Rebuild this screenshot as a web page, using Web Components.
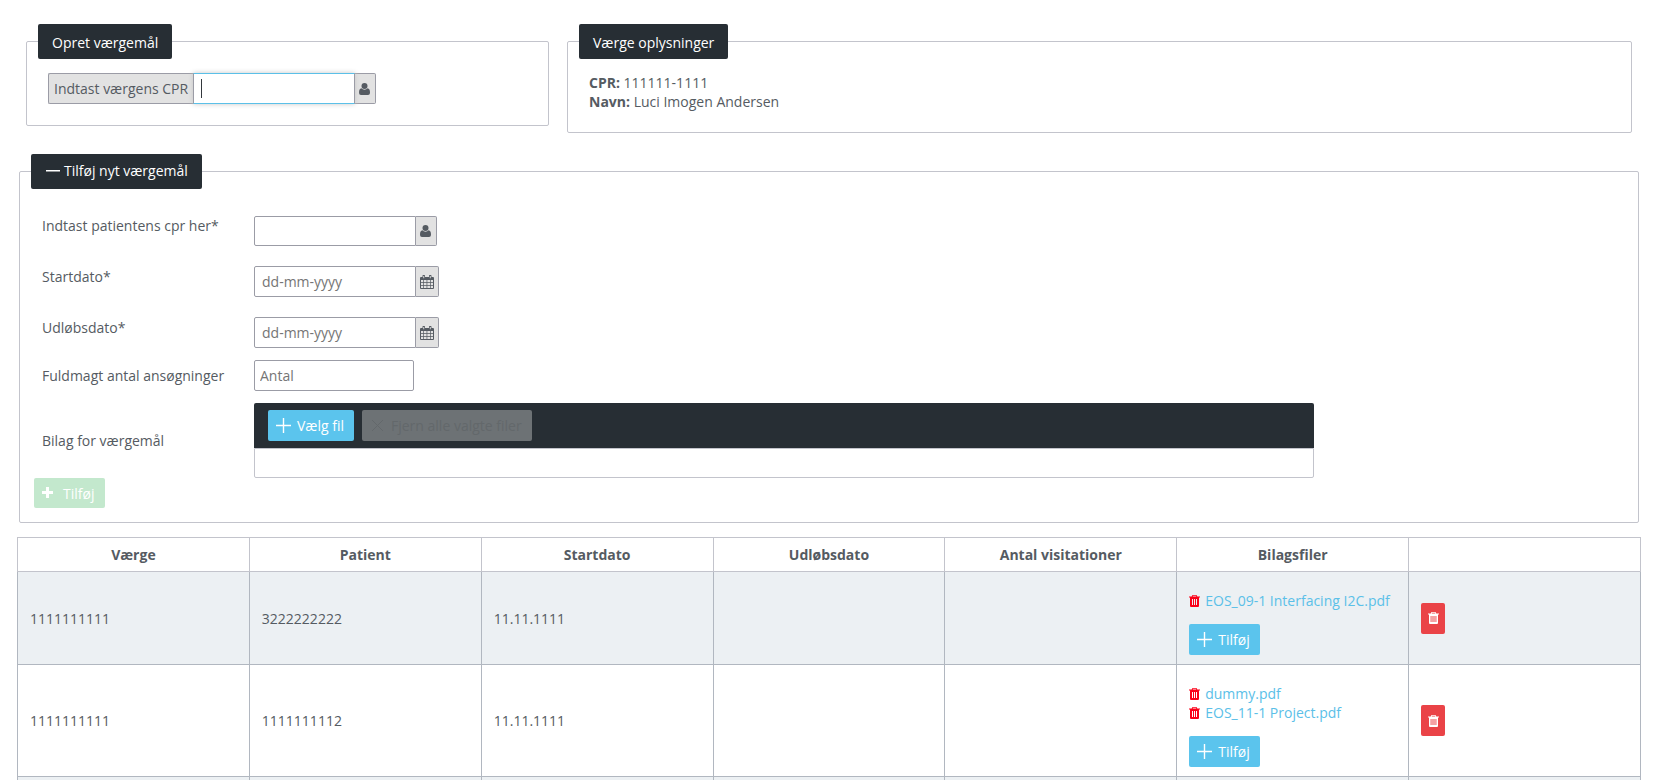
<!DOCTYPE html>
<html lang="da">
<head>
<meta charset="utf-8">
<title>Værgemål</title>
<style>
body{margin:0;background:#fff;font-family:"Open Sans","Noto Sans",sans-serif;font-size:14px;line-height:19px;color:#555b62}
</style>
</head>
<body>
<vm-page></vm-page>

<template id="t-icon">
<style>
:host{display:inline-flex;flex:none}
svg{display:block;fill:currentColor}
</style>
<svg aria-hidden="true"></svg>
</template>

<template id="t-panel">
<style>
:host{display:block}
fieldset{margin:0;min-width:0;border:1px solid #c3c4cc;border-radius:2px;padding:var(--panel-pad,14px 21px 21px)}
legend{margin-left:var(--legend-shift,-10px);padding:var(--legend-pad,2px 14px 0);background:#272e34;color:#fff;border-radius:2px;line-height:33px}
legend span{display:flex;align-items:center;gap:4px}
</style>
<fieldset><legend><span><slot name="icon"></slot><slot name="title"></slot></span></legend><slot></slot></fieldset>
</template>

<template id="t-button">
<style>
:host{display:inline-block;vertical-align:top}
button{display:flex;align-items:center;gap:6px;height:31px;margin:0;padding:0 10px 0 8px;border:0;border-radius:2px;background:#5bc4ed;color:#fff;font:inherit}
:host([kind=danger]) button{background:#ea4347;padding:0 6px 0 7px}
:host([kind=success]) button{background:#c3e8cd;height:30px;gap:10px;padding-right:11px}
:host([kind=muted]) button{background:#6d7275;color:#63686b}
</style>
<button type="button"><slot></slot></button>
</template>

<template id="t-field">
<style>
:host{display:flex;position:relative}
.addon{display:flex;align-items:center;background:#e2e2e2;border:1px solid #9b9ca6;padding:0 5px;color:#555b62}
label.addon{border-right:0;border-radius:2px 0 0 2px;white-space:nowrap}
.box{display:flex;position:relative}
.end{border-left:0;border-radius:0 2px 2px 0}
.end.person{padding:0 5px 0 4px}
.end.calendar{padding:0 4px}
input{box-sizing:border-box;width:162px;height:var(--field-height,31px);margin:0;padding:0 7px;border:1px solid #9b9ca6;border-radius:2px;background:#fff;color:#555b62;font:inherit;outline:0;caret-color:transparent}
input.plain{width:160px;padding:0 5px}
input::placeholder{color:#757575;opacity:1}
input:focus{border-top-color:#5bc0e8;border-bottom-color:#5bc0e8;box-shadow:0 0 5px #c8c8c8}
.caret{display:none;position:absolute;left:8px;top:6px;bottom:6px;width:1px;background:#33383d}
input:focus + .caret{display:block}
[hidden]{display:none}
</style>
<label hidden class="addon" for="i"></label><span class="box"><input id="i" type="text"><span class="caret"></span></span><span class="addon end" hidden><vm-icon></vm-icon></span>
</template>

<template id="t-uploader">
<style>
:host{display:block}
.bar{display:flex;gap:8px;padding:7px 14px;background:#272e34;border-radius:2px 2px 0 0}
.list{box-sizing:border-box;height:30px;border:1px solid #c3c4cc;border-radius:0 0 2px 2px}
</style>
<div class="bar"><vm-button><vm-icon name="plus"></vm-icon>Vælg fil</vm-button><vm-button kind="muted"><vm-icon name="cross"></vm-icon>Fjern alle valgte filer</vm-button></div>
<div class="list"></div>
</template>

<template id="t-table">
<style>
:host{display:block}
table{width:100%;table-layout:fixed;border-collapse:collapse}
th,td{box-sizing:border-box;border:1px solid #b1b7c0;padding:9px 12px}
th{height:34px;padding:7px 12px;text-align:center}
thead th,thead td{border-color:#c3c4cc}
td{text-align:left;vertical-align:middle}
tbody tr:nth-child(odd){background:#ecf0f3}
ul{list-style:none;margin:10px 0 14px;padding:0}
li{display:flex;align-items:center;gap:5px;white-space:nowrap}
li vm-icon{color:#fb0018}
a{color:#5bc0e8;text-decoration:none}
</style>
<table><thead><tr></tr></thead><tbody></tbody></table>
</template>

<template id="t-page">
<style>
:host{display:block;height:100vh;overflow:hidden}
.top{display:grid;grid-template-columns:523fr 1065fr;gap:18px;align-items:start;margin:24px 23px 0 26px}
.info p{margin:0}
.create{margin:21px 16px 0 19px;--panel-pad:26px 14px 14px;--legend-shift:-3px;--legend-pad:0 14px 2px}
.form{display:grid;grid-template-columns:212px 1fr;padding-left:8px}
.l{padding-top:1px}
.l.mid{padding-top:6px}
.l.center{padding-top:0;align-self:center}
.cell{padding-bottom:20px}
.cell.first{padding-top:1px;--field-height:30px}
.cell.short{padding-bottom:12px}
.cell.last{padding:0;width:1060px;max-width:100%}
vm-table{margin:14px 14px 0 17px}
</style>
<div class="top">
<vm-panel><span slot="title">Opret værgemål</span><vm-field label="Indtast værgens CPR" icon="person" focused></vm-field></vm-panel>
<vm-panel class="info"><span slot="title">Værge oplysninger</span><p><b>CPR:</b> 111111-1111</p><p><b>Navn:</b> Luci Imogen Andersen</p></vm-panel>
</div>
<vm-panel class="create"><vm-icon slot="icon" name="minus"></vm-icon><span slot="title">Tilføj nyt værgemål</span>
<div class="form">
<span class="l">Indtast patientens cpr her*</span><div class="cell first"><vm-field name="Indtast patientens cpr her" icon="person"></vm-field></div>
<span class="l">Startdato*</span><div class="cell"><vm-field name="Startdato" placeholder="dd-mm-yyyy" icon="calendar"></vm-field></div>
<span class="l">Udløbsdato*</span><div class="cell short"><vm-field name="Udløbsdato" placeholder="dd-mm-yyyy" icon="calendar"></vm-field></div>
<span class="l mid">Fuldmagt antal ansøgninger</span><div class="cell short"><vm-field name="Fuldmagt antal ansøgninger" placeholder="Antal"></vm-field></div>
<span class="l center">Bilag for værgemål</span><div class="cell last"><vm-uploader></vm-uploader></div>
</div>
<vm-button kind="success"><vm-icon name="boldplus"></vm-icon>Tilføj</vm-button>
</vm-panel>
<vm-table></vm-table>
</template>

<script>
const ICONS={
 plus:[15,15,'<path d="M6.800 0h1.400v6.800H15v1.400H8.200V15H6.800V8.200H0V6.800h6.800z"/>'],
 minus:[15,15,'<path d="M1 7h14v1.500H1z"/>'],
 cross:[15,15,'<path d="M2 2l11 11M13 2L2 13" stroke="currentColor" fill="none"/>'],
 boldplus:[11,14,'<path d="M4 1h3v4h4v3H7v4H4V8H0V5h4z"/>'],
 person:[11,14,'<circle cx="5.500" cy="4" r="3"/><path d="M2.400 6.200C.8 6.500 0 8 0 10.500 0 12.200.8 13 2 13h7c1.200 0 2-.8 2-2.500 0-2.500-.8-4-2.400-4.300a4 4 0 0 1-6.200 0z"/>'],
 calendar:[14,14,'<path fill-rule="evenodd" d="M1 2h1.500V1a1.200 1.200 0 0 1 2.500 0v1h4V1a1.200 1.200 0 0 1 2.500 0v1H13a1 1 0 0 1 1 1v10a1 1 0 0 1-1 1H1a1 1 0 0 1-1-1V3a1 1 0 0 1 1-1zM1 5v2h2.300V5zm3 0v2h2.600V5zm3.300 0v2H10V5zm3.400 0v2H13V5zM1 7.700V10h2.300V7.700zm3 0V10h2.600V7.700zm3.300 0V10H10V7.700zm3.400 0V10H13V7.700zM1 10.700V13h2.300v-2.300zm3 0V13h2.600v-2.300zm3.300 0V13H10v-2.300zm3.400 0V13H13v-2.300zM3.300 1v2.300h.9V1zm6.500 0v2.300h.9V1z"/>'],
 trash:[11,14,'<path fill-rule="evenodd" d="M3.500 1h4l.8 1.500H11v1h-1V12a1 1 0 0 1-1 1H2a1 1 0 0 1-1-1V3.500H0v-1h2.700zm.5.800-.3.700h3.600L7 1.800zM3 5v6h1V5zm2 0v6h1V5zm2 0v6h1V5z"/>'],
 bin:[11,14,'<path fill-rule="evenodd" d="M3.500 1h4l.8 1.500H11v1h-1V12a1 1 0 0 1-1 1H2a1 1 0 0 1-1-1V3.500H0v-1h2.700zm.5.800-.3.700h3.600L7 1.800zM2.500 5v6h6V5z"/><path opacity=".5" d="M2.500 5h6v6h-6z"/>']
};
const stamp=(host,id)=>{
 const root=host.attachShadow({mode:'open'});
 root.append(document.getElementById(id).content.cloneNode(true));
 return root;
};
customElements.define('vm-icon',class extends HTMLElement{
 static observedAttributes=['name'];
 constructor(){super();this.svg=stamp(this,'t-icon').querySelector('svg')}
 attributeChangedCallback(){
  const [w,h,body]=ICONS[this.getAttribute('name')];
  this.svg.setAttribute('width',w);this.svg.setAttribute('height',h);
  this.svg.setAttribute('viewBox',`0 0 ${w} ${h}`);this.svg.innerHTML=body;
 }
});
customElements.define('vm-panel',class extends HTMLElement{
 constructor(){super();stamp(this,'t-panel')}
});
customElements.define('vm-button',class extends HTMLElement{
 constructor(){super();this.button=stamp(this,'t-button').querySelector('button')}
 connectedCallback(){
  const label=this.getAttribute('label');
  if(label)this.button.setAttribute('aria-label',label);
  this.button.disabled=['success','muted'].includes(this.getAttribute('kind'));
 }
});
customElements.define('vm-field',class extends HTMLElement{
 constructor(){super();this.root=stamp(this,'t-field')}
 connectedCallback(){
  const label=this.root.querySelector('label'),input=this.root.querySelector('input'),end=this.root.querySelector('.end');
  const text=this.getAttribute('label'),icon=this.getAttribute('icon');
  if(text){label.textContent=text;label.hidden=false;input.style.borderRadius='0'}
  else{label.remove();input.setAttribute('aria-label',this.getAttribute('name'))}
  input.placeholder=this.getAttribute('placeholder')||'';
  if(icon){
   end.hidden=false;end.classList.add(icon);end.firstElementChild.setAttribute('name',icon);
   input.style.borderTopRightRadius=input.style.borderBottomRightRadius='0';
  }else{end.remove();input.classList.add('plain')}
  if(this.hasAttribute('focused'))input.focus();
 }
});
customElements.define('vm-uploader',class extends HTMLElement{
 constructor(){super();stamp(this,'t-uploader')}
});
customElements.define('vm-table',class extends HTMLElement{
 constructor(){
  super();
  const root=stamp(this,'t-table');
  const heads=['Værge','Patient','Startdato','Udløbsdato','Antal visitationer','Bilagsfiler',''];
  const rows=[
   ['1111111111','3222222222','11.11.1111',['EOS_09-1 Interfacing I2C.pdf']],
   ['1111111111','1111111112','11.11.1111',['dummy.pdf','EOS_11-1 Project.pdf']],
   ['','','',[]]
  ];
  root.querySelector('thead tr').innerHTML=heads.map(h=>h?`<th scope="col">${h}</th>`:'<td></td>').join('');
  root.querySelector('tbody').innerHTML=rows.map(([v,p,s,files])=>`<tr><td>${v}</td><td>${p}</td><td>${s}</td><td></td><td></td><td>${
   files.length?`<ul>${files.map(f=>`<li><vm-icon name="trash"></vm-icon><a href="#">${f}</a></li>`).join('')}</ul><vm-button><vm-icon name="plus"></vm-icon>Tilføj</vm-button>`:''
  }</td><td>${files.length?'<vm-button kind="danger" label="Slet"><vm-icon name="bin"></vm-icon></vm-button>':''}</td></tr>`).join('');
 }
});
customElements.define('vm-page',class extends HTMLElement{
 constructor(){super();stamp(this,'t-page')}
});
</script>
</body>
</html>
